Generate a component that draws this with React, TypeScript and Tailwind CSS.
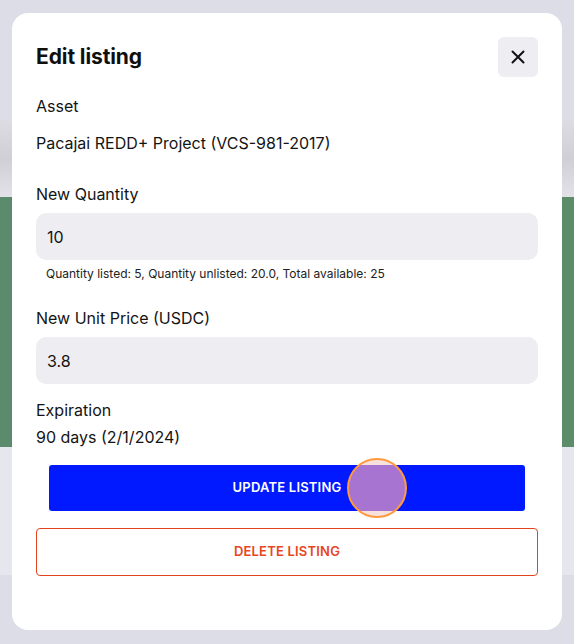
import React from "react";

function CursorDot() {
  // click marker over the update button
  return (
    <svg width="62" height="62" viewBox="0 0 62 62" className="absolute left-[346px] top-[457px]">
      <defs>
        <clipPath id="dot">
          <circle cx="31" cy="31" r="29" />
        </clipPath>
      </defs>
      <circle cx="31" cy="31" r="29" fill="#f8e0dc" />
      <rect x="0" y="8" width="62" height="46" fill="#a874d2" clipPath="url(#dot)" />
      <circle cx="31" cy="31" r="29" fill="none" stroke="#ff9a3c" strokeWidth="2" />
    </svg>
  );
}

function Field({ label, value }: { label: string; value: string }) {
  return (
    <div className="flex flex-col">
      <div className="text-base leading-6 text-[#141414]">{label}</div>
      <div className="mt-[7px] h-[47px] w-full rounded-[10px] bg-[#ededf2] flex items-center pl-[11px] text-base text-[#141414]">
        {value}
      </div>
    </div>
  );
}

export default function App() {
  return (
    <div
      className="relative w-[574px] h-[644px] overflow-hidden bg-[#dcdde7]"
      style={{ fontFamily: "Inter, 'Noto Sans', sans-serif" }}
    >
      {/* page behind the modal */}
      <div className="flex flex-col">
        <div className="h-[120px]" />
        <div className="h-[77px] bg-gradient-to-b from-[#dcdce2] via-[#cfcfd5] to-[#e2e2e8]" />
        <div className="h-[250px] bg-gradient-to-r from-[#5c8a6c] via-[#4f7f5f] to-[#5b8d69]" />
        <div className="h-[128px] bg-[#e6e6ee]" />
      </div>

      {/* modal */}
      <div className="absolute left-[12px] top-[13px] w-[550px] h-[617px] rounded-2xl bg-white px-6 pt-6">
        <div className="flex items-center justify-between">
          <div className="text-[21px] font-bold text-[#0f0f0f] tracking-[-0.1px]">Edit listing</div>
          <button className="w-10 h-10 rounded-md bg-[#ededf2] flex items-center justify-center">
            <svg width="16" height="16" viewBox="0 0 16 16" fill="none" stroke="#111" strokeWidth="2" strokeLinecap="round">
              <path d="M2.5 2.5 L13.5 13.5 M13.5 2.5 L2.5 13.5" />
            </svg>
          </button>
        </div>

        <div className="mt-[17px] text-base leading-6 text-[#141414]">Asset</div>
        <div className="mt-[13px] text-base leading-6 text-[#141414]">Pacajai REDD+ Project (VCS-981-2017)</div>

        <div className="mt-[27px]">
          <Field label="New Quantity" value="10" />
        </div>
        <div className="mt-[6px] pl-[10px] text-[12px] leading-4 text-[#222]">
          Quantity listed: 5, Quantity unlisted: 20.0, Total available: 25
        </div>

        <div className="mt-[24px]">
          <Field label="New Unit Price (USDC)" value="3.8" />
        </div>

        <div className="mt-[14px] text-base leading-6 text-[#141414]">Expiration</div>
        <div className="mt-[3px] text-base leading-6 text-[#141414]">90 days (2/1/2024)</div>

        <div className="mt-[16px] px-[13px]">
          <button className="w-full h-[46px] rounded-[3px] bg-[#0019ff] text-white text-[13px] font-semibold tracking-[0.2px]">
            UPDATE LISTING
          </button>
        </div>
        <button className="mt-[17px] w-full h-[48px] rounded-[4px] border border-[#e0451f] text-[#e8461e] text-[13px] font-semibold tracking-[0.2px]">
          DELETE LISTING
        </button>
      </div>

      <CursorDot />
    </div>
  );
}
